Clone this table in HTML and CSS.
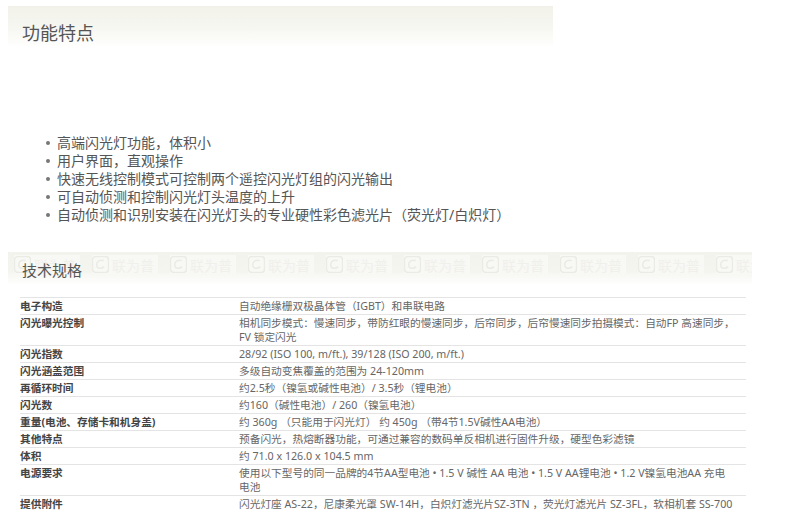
FILE: index.html
```html
<!DOCTYPE html>
<html lang="zh-CN">
<head>
<meta charset="utf-8">
<title>功能特点</title>
<link rel="stylesheet" href="styles.css">
</head>
<body>
<div class="feat-head">功能特点</div>

<ul class="features">
  <li>高端闪光灯功能，体积小</li>
  <li>用户界面，直观操作</li>
  <li>快速无线控制模式可控制两个遥控闪光灯组的闪光输出</li>
  <li>可自动侦测和控制闪光灯头温度的上升</li>
  <li>自动侦测和识别安装在闪光灯头的专业硬性彩色滤光片（荧光灯/白炽灯）</li>
</ul>

<div class="spec-head">
  <div class="marks" aria-hidden="true">
    <span class="mark"><svg viewBox="0 0 16 16"><rect x="0.5" y="0.5" width="15" height="15" rx="3"/><path d="M11 4.5 C8 3 4 5 4.5 9 C5 12 9 12.5 11.5 10"/></svg>联为普</span>
    <span class="mark"><svg viewBox="0 0 16 16"><rect x="0.5" y="0.5" width="15" height="15" rx="3"/><path d="M11 4.5 C8 3 4 5 4.5 9 C5 12 9 12.5 11.5 10"/></svg>联为普</span>
    <span class="mark"><svg viewBox="0 0 16 16"><rect x="0.5" y="0.5" width="15" height="15" rx="3"/><path d="M11 4.5 C8 3 4 5 4.5 9 C5 12 9 12.5 11.5 10"/></svg>联为普</span>
    <span class="mark"><svg viewBox="0 0 16 16"><rect x="0.5" y="0.5" width="15" height="15" rx="3"/><path d="M11 4.5 C8 3 4 5 4.5 9 C5 12 9 12.5 11.5 10"/></svg>联为普</span>
    <span class="mark"><svg viewBox="0 0 16 16"><rect x="0.5" y="0.5" width="15" height="15" rx="3"/><path d="M11 4.5 C8 3 4 5 4.5 9 C5 12 9 12.5 11.5 10"/></svg>联为普</span>
    <span class="mark"><svg viewBox="0 0 16 16"><rect x="0.5" y="0.5" width="15" height="15" rx="3"/><path d="M11 4.5 C8 3 4 5 4.5 9 C5 12 9 12.5 11.5 10"/></svg>联为普</span>
    <span class="mark"><svg viewBox="0 0 16 16"><rect x="0.5" y="0.5" width="15" height="15" rx="3"/><path d="M11 4.5 C8 3 4 5 4.5 9 C5 12 9 12.5 11.5 10"/></svg>联为普</span>
    <span class="mark"><svg viewBox="0 0 16 16"><rect x="0.5" y="0.5" width="15" height="15" rx="3"/><path d="M11 4.5 C8 3 4 5 4.5 9 C5 12 9 12.5 11.5 10"/></svg>联为普</span>
    <span class="mark"><svg viewBox="0 0 16 16"><rect x="0.5" y="0.5" width="15" height="15" rx="3"/><path d="M11 4.5 C8 3 4 5 4.5 9 C5 12 9 12.5 11.5 10"/></svg>联为普</span>
    <span class="mark"><svg viewBox="0 0 16 16"><rect x="0.5" y="0.5" width="15" height="15" rx="3"/><path d="M11 4.5 C8 3 4 5 4.5 9 C5 12 9 12.5 11.5 10"/></svg>联为普</span>
  </div>
  <span class="spec-title">技术规格</span>
</div>

<div class="specs">
  <div class="row"><div class="k">电子构造</div><div class="v">自动绝缘栅双极晶体管（IGBT）和串联电路</div></div>
  <div class="row"><div class="k">闪光曝光控制</div><div class="v">相机同步模式：慢速同步，带防红眼的慢速同步，后帘同步，后帘慢速同步拍摄模式：自动FP 高速同步，<br>FV 锁定闪光</div></div>
  <div class="row"><div class="k">闪光指数</div><div class="v">28/92 (ISO 100, m/ft.), 39/128 (ISO 200, m/ft.)</div></div>
  <div class="row"><div class="k">闪光涵盖范围</div><div class="v">多级自动变焦覆盖的范围为 24-120mm</div></div>
  <div class="row"><div class="k">再循环时间</div><div class="v">约2.5秒（镍氢或碱性电池）/ 3.5秒（锂电池）</div></div>
  <div class="row"><div class="k">闪光数</div><div class="v">约160（碱性电池）/ 260（镍氢电池）</div></div>
  <div class="row"><div class="k">重量(电池、存储卡和机身盖)</div><div class="v">约 360g （只能用于闪光灯） 约 450g （带4节1.5V碱性AA电池）</div></div>
  <div class="row"><div class="k">其他特点</div><div class="v">预备闪光，热熔断器功能，可通过兼容的数码单反相机进行固件升级，硬型色彩滤镜</div></div>
  <div class="row"><div class="k">体积</div><div class="v">约 71.0 x 126.0 x 104.5 mm</div></div>
  <div class="row"><div class="k">电源要求</div><div class="v">使用以下型号的同一品牌的4节AA型电池 • 1.5 V 碱性 AA 电池 • 1.5 V AA锂电池 • 1.2 V镍氢电池AA 充电<br>电池</div></div>
  <div class="row last"><div class="k">提供附件</div><div class="v nowrap">闪光灯座 AS-22，尼康柔光罩 SW-14H，白炽灯滤光片SZ-3TN ，荧光灯滤光片 SZ-3FL，软相机套 SS-700</div></div>
</div>
</body>
</html>
```

FILE: styles.css
```css
html, body {
  margin: 0;
  padding: 0;
  background: #fff;
}

body {
  font-family: "Noto Sans", "Noto Sans CJK SC", sans-serif;
  color: #555;
}

.feat-head {
  margin: 6px 0 0 8px;
  width: 545px;
  height: 42px;
  box-sizing: border-box;
  padding: 16px 0 0 14px;
  font-size: 18px;
  line-height: 22px;
  color: #555;
  background: linear-gradient(to bottom, #f2f2ea 0%, #f7f7f2 55%, #ffffff 100%);
}

.features {
  list-style: none;
  margin: 86px 0 0 0;
  padding: 0 0 0 46px;
  font-size: 14px;
  line-height: 18px;
  color: #555;
}

.features li::before {
  content: "";
  display: inline-block;
  width: 4px;
  height: 4px;
  border-radius: 50%;
  background: #777;
  vertical-align: middle;
  margin: -2px 7px 0 0;
}

.spec-head {
  position: relative;
  margin: 28px 0 0 8px;
  width: 744px;
  height: 33px;
  box-sizing: border-box;
  padding: 7px 0 0 14px;
  background: linear-gradient(to bottom, #f3f3ed 0%, #f5f5f0 60%, #ffffff 100%);
  overflow: hidden;
}

.marks {
  position: absolute;
  left: 6px;
  top: 3px;
  display: flex;
  gap: 12px;
  white-space: nowrap;
}

.mark {
  display: flex;
  align-items: center;
  gap: 3px;
  width: 66px;
  height: 19px;
  font-size: 14px;
  color: #f0f0eb;
  background: #f8f8f5;
}

.mark svg {
  width: 17px;
  height: 17px;
  fill: none;
  stroke: #ebebe5;
  stroke-width: 1.4;
}

.spec-title {
  position: relative;
  font-size: 15px;
  line-height: 18px;
  color: #555;
}

.specs {
  margin: 12px 0 0 20px;
  width: 726px;
  border-top: 1px solid #e4e4e4;
  font-size: 10.7px;
  line-height: 14px;
}

.row {
  display: grid;
  grid-template-columns: 218px 1fr;
  padding: 1px 0 1px;
  border-bottom: 1px solid #e4e4e4;
}

.row.last {
  border-bottom: none;
}

.k {
  font-weight: bold;
  color: #444;
}

.v {
  color: #666;
  padding-left: 1px;
}

.nowrap {
  white-space: nowrap;
}
```
